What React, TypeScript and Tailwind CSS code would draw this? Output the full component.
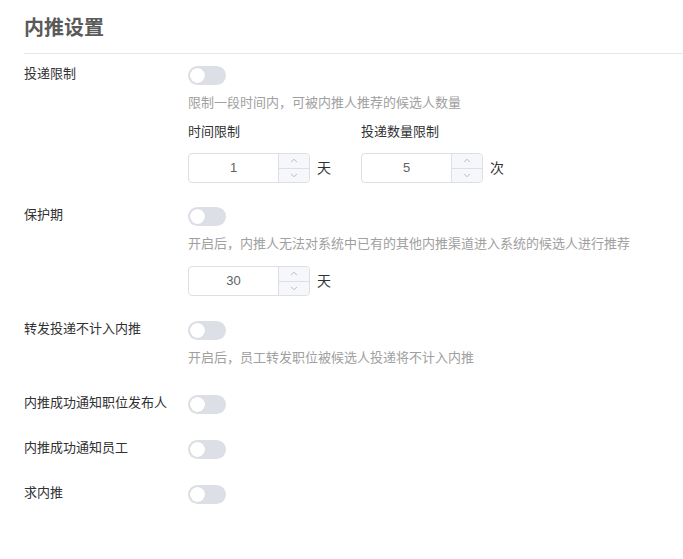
import type { ReactNode } from "react";

const FONT = {
  fontFamily: '"Liberation Sans", "Noto Sans CJK SC", sans-serif',
};

function Switch() {
  return (
    <span className="relative block h-[19px] w-[38px] rounded-full bg-[#dcdfe6]">
      <span className="absolute left-[2px] top-[2px] block h-[15px] w-[15px] rounded-full bg-white shadow-[0_0_1px_rgba(0,0,0,0.1)]" />
    </span>
  );
}

function Chevron({ up }: { up?: boolean }) {
  return (
    <svg width="8" height="5" viewBox="0 0 8 5" fill="none" className="block">
      <path
        d={up ? "M1 4.2 4 1.2l3 3" : "M1 0.8l3 3 3-3"}
        stroke="#b8bcc4"
        strokeWidth="1"
      />
    </svg>
  );
}

function NumberInput({ value, unit }: { value: number; unit: string }) {
  return (
    <div className="flex items-center">
      <div className="flex h-[30px] w-[122px] rounded-[4px] border border-[#dcdfe6] bg-white">
        <span className="flex flex-1 items-center justify-center text-[13px] text-[#606266]">
          {value}
        </span>
        <div className="flex w-[31px] flex-col rounded-r-[4px] border-l border-[#dcdfe6] bg-[#f5f7fa]">
          <span className="flex flex-1 items-center justify-center border-b border-[#dcdfe6]">
            <Chevron up />
          </span>
          <span className="flex flex-1 items-center justify-center">
            <Chevron />
          </span>
        </div>
      </div>
      <span className="ml-[7px] text-[14px] text-[#303133]">{unit}</span>
    </div>
  );
}

function FormItem({ label, children, className = "" }: { label: string; children?: ReactNode; className?: string }) {
  return (
    <div className={`flex ${className}`}>
      <label className="w-[164px] shrink-0 text-[13px] leading-[15px] text-[#303133]">{label}</label>
      <div className="flex flex-col">
        <Switch />
        {children}
      </div>
    </div>
  );
}

function Hint({ children }: { children: ReactNode }) {
  return <p className="mt-2 text-[13px] leading-[20px] text-[#a0a0a0]">{children}</p>;
}

export default function App() {
  return (
    <div className="min-h-[559px] bg-white pl-6 pt-[15px]" style={FONT}>
      <h1 className="text-[20px] font-bold leading-[26px] text-[#5a5a5a]">内推设置</h1>
      <div className="mt-[12px] h-px bg-[#e4e7ed]" />

      <div className="mt-[12px] flex flex-col">
        <FormItem label="投递限制">
          <Hint>限制一段时间内，可被内推人推荐的候选人数量</Hint>
          <div className="mt-[9px] flex gap-[30px]">
            <div className="flex flex-col">
              <span className="text-[13px] leading-[20px] text-[#303133]">时间限制</span>
              <div className="mt-[11px]">
                <NumberInput value={1} unit="天" />
              </div>
            </div>
            <div className="flex flex-col">
              <span className="text-[13px] leading-[20px] text-[#303133]">投递数量限制</span>
              <div className="mt-[11px]">
                <NumberInput value={5} unit="次" />
              </div>
            </div>
          </div>
        </FormItem>

        <FormItem label="保护期" className="mt-6">
          <Hint>开启后，内推人无法对系统中已有的其他内推渠道进入系统的候选人进行推荐</Hint>
          <div className="mt-3">
            <NumberInput value={30} unit="天" />
          </div>
        </FormItem>

        <FormItem label="转发投递不计入内推" className="mt-[25px]">
          <Hint>开启后，员工转发职位被候选人投递将不计入内推</Hint>
        </FormItem>

        <FormItem label="内推成功通知职位发布人" className="mt-[27px]" />
        <FormItem label="内推成功通知员工" className="mt-[26px]" />
        <FormItem label="求内推" className="mt-[26px]" />
      </div>
    </div>
  );
}
